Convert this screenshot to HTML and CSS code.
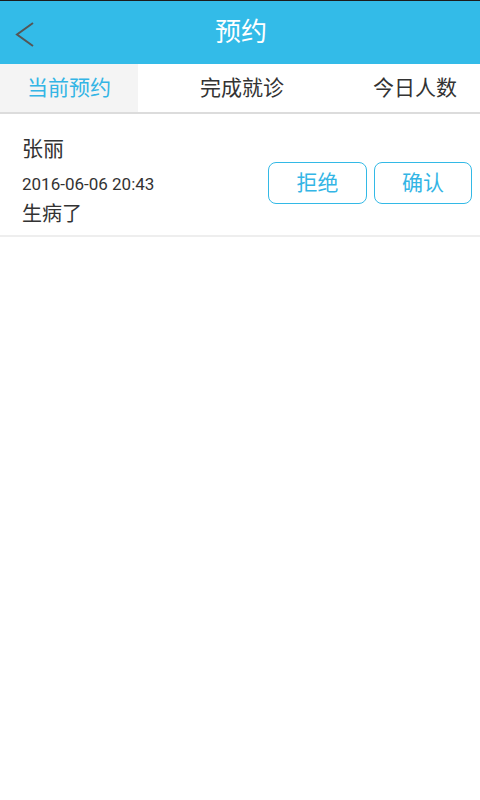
FILE: index.html
```html
<!DOCTYPE html>
<html lang="zh">
<head>
<meta charset="utf-8">
<link rel="stylesheet" href="styles.css">
</head>
<body>
<div class="statusline"></div>
<header class="appbar">
  <div class="back">
    <svg width="24" height="30" viewBox="0 0 24 30"><polyline points="20,3 4,14.5 20,26" fill="none" stroke="#555" stroke-width="2"/></svg>
  </div>
  <h1 class="title">预约</h1>
</header>
<nav class="tabs">
  <div class="tab active">当前预约</div>
  <div class="tab">完成就诊</div>
  <div class="tab">今日人数</div>
</nav>
<div class="list">
  <div class="item">
    <div class="info">
      <div class="name">张丽</div>
      <div class="date">2016-06-06 20:43</div>
      <div class="reason">生病了</div>
    </div>
    <div class="actions">
      <button class="btn reject">拒绝</button>
      <button class="btn confirm">确认</button>
    </div>
  </div>
</div>
</body>
</html>
```
FILE: styles.css
```css
html, body {
  margin: 0;
  padding: 0;
  background: #fff;
  font-family: Roboto, "Noto Sans CJK SC", sans-serif;
  width: 480px;
  overflow: hidden;
}
.statusline {
  height: 1px;
  background: #1c1c1c;
}
.appbar {
  height: 63px;
  background: #33bbe8;
  display: flex;
  align-items: center;
  justify-content: center;
  position: relative;
}
.back {
  position: absolute;
  left: 13px;
  top: 19px;
  width: 24px;
  height: 30px;
}
.back svg { display: block; }
.title {
  margin: 0;
  font-size: 26px;
  font-weight: normal;
  color: #fff;
  line-height: 63px;
  padding-left: 2px;
}
.tabs {
  display: flex;
  gap: 35px;
  height: 48px;
  border-bottom: 2px solid #dcdcdc;
  overflow: hidden;
}
.tab {
  flex: 0 0 138px;
  text-align: center;
  font-size: 21px;
  line-height: 48px;
  color: #333;
}
.tab.active {
  background: #f4f4f4;
  color: #33b5e5;
}
.item {
  display: flex;
  justify-content: space-between;
  border-bottom: 2px solid #eeeeee;
  padding: 0 8px 0 22px;
}
.info {
  padding-top: 20px;
  padding-bottom: 6px;
  color: #333;
}
.name {
  font-size: 21px;
  line-height: 30px;
}
.date {
  font-size: 17px;
  line-height: 28px;
  margin-top: 6px;
}
.reason {
  font-size: 20px;
  line-height: 30px;
  margin-top: 1px;
}
.actions {
  display: flex;
  gap: 7px;
  padding-top: 48px;
  align-items: flex-start;
}
.btn {
  height: 42px;
  border: 1.5px solid #33b9e6;
  border-radius: 8px;
  background: #fff;
  color: #33b5e5;
  font-family: Roboto, "Noto Sans CJK SC", sans-serif;
  font-size: 21px;
  padding: 0;
  line-height: 38px;
}
.reject { width: 99px; }
.confirm { width: 98px; }
```
